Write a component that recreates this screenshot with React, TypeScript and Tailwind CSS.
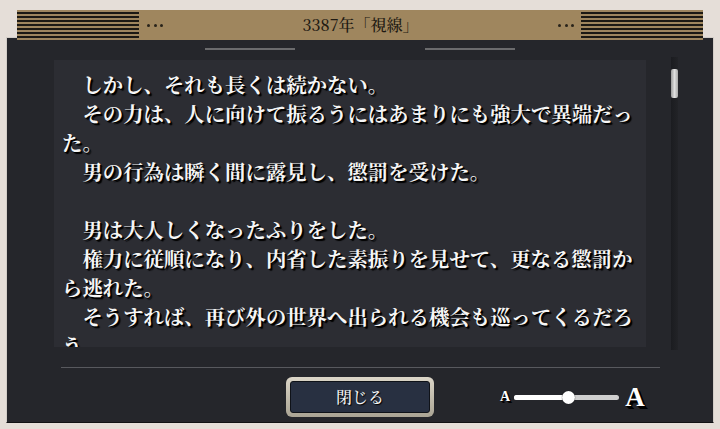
import React from "react";

const serif = '"Noto Serif CJK JP", "Noto Serif JP", "IPAexMincho", "Liberation Serif", "Noto Sans CJK JP", serif';

function Stripes() {
  return (
    <div className="w-[122px] h-[30px] flex flex-col pt-[2px] gap-[2.5px]">
      {[0, 1, 2, 3, 4, 5, 6].map((i) => (
        <div key={i} className="h-[1.5px] bg-[#1c1914]" />
      ))}
    </div>
  );
}

function Dots() {
  return (
    <div className="flex gap-[3.5px] items-center">
      <div className="w-[3px] h-[3px] rounded-full bg-[#28231a]" />
      <div className="w-[3px] h-[3px] rounded-full bg-[#28231a]" />
      <div className="w-[3px] h-[3px] rounded-full bg-[#28231a]" />
    </div>
  );
}

const lines: string[] = [
  "\u3000しかし、それも長くは続かない。",
  "\u3000その力は、人に向けて振るうにはあまりにも強大で異端だっ",
  "た。",
  "\u3000男の行為は瞬く間に露見し、懲罰を受けた。",
  "",
  "\u3000男は大人しくなったふりをした。",
  "\u3000権力に従順になり、内省した素振りを見せて、更なる懲罰か",
  "ら逃れた。",
  "\u3000そうすれば、再び外の世界へ出られる機会も巡ってくるだろ",
  "う。",
];

export default function App() {
  return (
    <div className="w-[720px] h-[429px] bg-[#e5ded8] pt-[10px] overflow-hidden" style={{ fontFamily: serif }}>
      <div className="relative z-10 mx-[17px] h-[30px] bg-[#9f865e] flex items-stretch">
        <Stripes />
        <div className="flex items-center ml-[8px]">
          <Dots />
        </div>
        <div className="flex-1 flex items-center justify-center text-[16px] font-medium text-[#1d1912] leading-none">
          3387年「視線」
        </div>
        <div className="flex items-center mr-[7px]">
          <Dots />
        </div>
        <Stripes />
      </div>
      <div className="mx-[6px] -mt-[3px] h-[386px] bg-[#25262b] border border-[#d3cdc7] border-b-[#111214] flex flex-col">
        <div className="mt-[10px] h-[2px] flex justify-center gap-[130px]">
          <div className="w-[90px] h-[2px] bg-[#6b6b6d]" />
          <div className="w-[90px] h-[2px] bg-[#6b6b6d]" />
        </div>
        <div className="mt-[7px] ml-[47px] flex items-start">
          <div className="mt-[3px] w-[592px] h-[287px] bg-[#2c2d33] overflow-hidden pl-[8px] pt-[10px]">
            {lines.map((l, i) => (
              <div
                key={i}
                className="h-[29px] leading-[29px] text-[20.4px] font-bold text-[#f6f6f6] whitespace-nowrap [text-shadow:2px_2px_1px_#000,1px_1px_0_#000]"
              >
                {l || "\u00a0"}
              </div>
            ))}
          </div>
          <div className="ml-[25px] w-[7px] h-[293px] bg-gradient-to-r from-[#1b1c20] to-[#222327] relative">
            <div className="absolute left-[0px] top-[12px] w-[7px] h-[29px] rounded-[2px] bg-gradient-to-r from-[#9c9c9c] via-[#e0e0e0] to-[#a8a8a8]" />
          </div>
        </div>
        <div className="mt-[17px] ml-[54px] w-[599px] h-[1px] bg-[#58595e]" />
        <div className="mt-[9px] flex items-center">
          <div className="ml-[279px] w-[148px] h-[40px] rounded-[6px] bg-gradient-to-b from-[#dcd6c8] via-[#c2bcad] to-[#aaa494] p-[4px]">
            <div className="w-full h-full rounded-[3px] bg-[#283041] border border-[#0f1218] flex items-center justify-center text-[16px] font-medium text-[#f4f4f4] [text-shadow:1px_1px_1px_#000]">
              閉じる
            </div>
          </div>
          <div className="ml-[66px] flex items-center">
            <div className="text-[14px] font-bold text-white leading-none [text-shadow:1px_1px_0_#000,2px_2px_0_#000]" style={{ fontFamily: '"Liberation Serif", serif' }}>
              A
            </div>
            <div className="ml-[4px] relative w-[105px] h-[5px] rounded-full bg-[#cfcfcf]">
              <div className="absolute left-0 top-0 h-[5px] w-[54px] rounded-full bg-white" />
              <div className="absolute left-[48px] top-[-4px] w-[13px] h-[13px] rounded-full bg-white shadow-[0_0_1px_#000]" />
            </div>
            <div className="ml-[6px] text-[27px] font-bold text-white leading-none [text-shadow:1px_1px_0_#000,2px_2px_0_#000,3px_3px_0_#000]" style={{ fontFamily: '"Liberation Serif", serif' }}>
              A
            </div>
          </div>
        </div>
      </div>
    </div>
  );
}
